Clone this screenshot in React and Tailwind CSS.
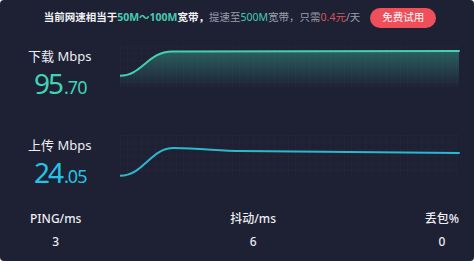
import React from "react";

function Grid({ id, h }) {
  return (
    <>
      <defs>
        <pattern id={id} width="7" height="7" patternUnits="userSpaceOnUse">
          <path d="M7 0 L0 0 0 7" fill="none" stroke="rgba(255,255,255,0.03)" strokeWidth="1" />
        </pattern>
      </defs>
      <rect x="0" y="0" width="339" height={h} fill={`url(#${id})`} />
    </>
  );
}

function DownChart() {
  const line = "M0 29.7 C 22 29.7, 28 5.5, 52 5.5 L 339 5";
  return (
    <svg width="340" height="44" viewBox="0 0 340 44" className="block">
      <defs>
        <linearGradient id="dfill" x1="0" y1="0" x2="0" y2="1">
          <stop offset="0" stopColor="#3ecfad" stopOpacity="0.36" />
          <stop offset="1" stopColor="#3ecfad" stopOpacity="0" />
        </linearGradient>
      </defs>
      <Grid id="g1" h={42} />
      <path d={line + " L 339 42 L 0 42 Z"} fill="url(#dfill)" />
      <path d={line} fill="none" stroke="#43d1b0" strokeWidth="2" strokeLinecap="round" />
    </svg>
  );
}

function UpChart() {
  const line = "M0 40.7 C 24 40.7, 30 13, 54 13 C 80 13, 100 16, 120 16 L 339 18";
  return (
    <svg width="340" height="46" viewBox="0 0 340 46" className="block">
      <Grid id="g2" h={40} />
      <path d={line} fill="none" stroke="#2bb8cf" strokeWidth="2" strokeLinecap="round" />
    </svg>
  );
}

export default function App() {
  const font = { fontFamily: '"Noto Sans", "Noto Sans CJK SC", sans-serif' };
  return (
    <div className="w-[474px] h-[261px] bg-[#1e2033] text-[#e6e7ec] flex flex-col overflow-hidden rounded-[4px]" style={font}>
      <div className="h-[34px] flex items-center justify-center gap-[10px] pt-[1px] pl-[6px]">
        <div className="text-[10.5px] whitespace-nowrap leading-none">
          <span className="font-bold text-[#f0f1f5]">当前网速相当于</span>
          <span className="font-bold text-[#45ccb0]">50M～100M</span>
          <span className="font-bold text-[#f0f1f5]">宽带，</span>
          <span className="text-[#9a9eab]">提速至</span>
          <span className="text-[#45ccb0]">500M</span>
          <span className="text-[#9a9eab]">宽带，只需</span>
          <span className="text-[#d9535d]">0.4元</span>
          <span className="text-[#9a9eab]">/天</span>
        </div>
        <div className="w-[66px] h-[20px] rounded-full bg-[#ee4f5a] flex items-center justify-center text-[10.5px] text-white">
          免费试用
        </div>
      </div>

      <div className="h-[89px] flex pt-[12px]">
        <div className="w-[120px] pl-[28px] flex flex-col">
          <div className="text-[13px] leading-[20px] text-[#eceef2]">下载 Mbps</div>
          <div className="mt-[3px] pl-[6px] flex items-baseline text-[#40d4b4] leading-[29px]">
            <span className="text-[28px] tracking-[-2px]">95</span>
            <span className="text-[18px] tracking-[-1px] ml-[2px]">.70</span>
          </div>
        </div>
        <DownChart />
      </div>

      <div className="h-[87px] flex pt-[12px]">
        <div className="w-[120px] pl-[28px] flex flex-col">
          <div className="text-[13px] leading-[20px] text-[#eceef2]">上传 Mbps</div>
          <div className="mt-[3px] pl-[6px] flex items-baseline text-[#22c4e6] leading-[29px]">
            <span className="text-[28px] tracking-[-2px]">24</span>
            <span className="text-[18px] tracking-[-1px] ml-[2px]">.05</span>
          </div>
        </div>
        <UpChart />
      </div>

      <div className="flex justify-between pl-[30px] pr-[15px] text-[12px] font-medium text-[#eceef2]">
        <div className="flex flex-col items-center">
          <div className="leading-[18px]">PING/ms</div>
          <div className="leading-[18px] mt-[5px]">3</div>
        </div>
        <div className="flex flex-col items-center">
          <div className="leading-[18px]">抖动/ms</div>
          <div className="leading-[18px] mt-[5px]">6</div>
        </div>
        <div className="flex flex-col items-center">
          <div className="leading-[18px]">丢包%</div>
          <div className="leading-[18px] mt-[5px]">0</div>
        </div>
      </div>
    </div>
  );
}
